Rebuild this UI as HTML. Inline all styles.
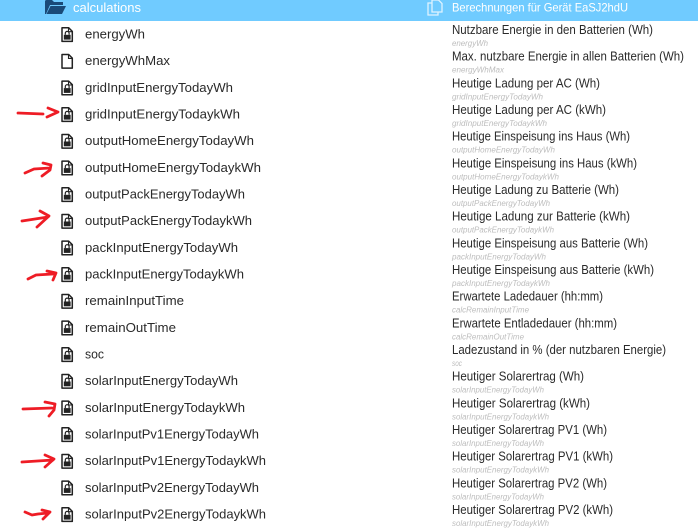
<!DOCTYPE html>
<html><head><meta charset="utf-8"><style>
html,body{margin:0;padding:0;background:#fff;width:698px;height:531px;overflow:hidden}
svg{display:block}
text{font-family:"Liberation Sans",sans-serif}
.l{font-size:13px;fill:#2a2a2a}
.t{font-size:12.5px;fill:#2a2a2a}
.s{font-size:8px;font-style:italic;fill:#bdbdbd}
.h{font-size:13px;fill:#fff}
.a{fill:none;stroke:#ee1c25;stroke-width:2.8;stroke-linecap:round;stroke-linejoin:round}
</style></head><body>
<svg width="698" height="531" viewBox="0 0 698 531" xmlns="http://www.w3.org/2000/svg">
<defs>
<g id="f"><path d="M1 .8H7.700L11.300 4.400V14.400H1Z" fill="#fff" stroke="#222" stroke-width="1.5" stroke-linejoin="round"/><path d="M7.500 1V4.700H11" fill="none" stroke="#222" stroke-width="1.100"/></g>
<g id="k"><use href="#f"/><rect x="2.800" y="7.800" width="6.800" height="4.800" fill="#222"/><path d="M4.300 7.800V6.300A1.900 1.900 0 0 1 8.100 6.300V7.800" fill="none" stroke="#222" stroke-width="1.200"/></g>
</defs>
<rect width="698" height="21" fill="#70cbff"/>
<path d="M45 1.500Q45 0 46.500 0H52L54 2H63V5H50L46 14H45Z" fill="#1a4a78"/>
<path d="M50.500 6H66L62 14H46.500Z" fill="#1a4a78"/>
<text class="h" x="73" y="12" textLength="68" lengthAdjust="spacingAndGlyphs">calculations</text>
<g fill="none" stroke="#dff3ff" stroke-width="1.300"><path d="M432 3H428V15H438V12"/><path d="M432 0H438.500L442 3.500V12H432Z"/></g>
<text class="h" x="452" y="11.500" textLength="176" lengthAdjust="spacingAndGlyphs" style="font-size:12px">Berechnungen für Gerät EaSJ2hdU</text>

<use href="#k" x="61" y="27"/>
<use href="#f" x="61" y="53.700"/>
<use href="#k" x="61" y="80.300"/>
<use href="#k" x="61" y="107"/>
<use href="#k" x="61" y="133.700"/>
<use href="#k" x="61" y="160.300"/>
<use href="#k" x="61" y="187"/>
<use href="#k" x="61" y="213.700"/>
<use href="#k" x="61" y="240.300"/>
<use href="#k" x="61" y="267"/>
<use href="#k" x="61" y="293.700"/>
<use href="#k" x="61" y="320.300"/>
<use href="#k" x="61" y="347"/>
<use href="#k" x="61" y="373.700"/>
<use href="#k" x="61" y="400.300"/>
<use href="#k" x="61" y="427"/>
<use href="#k" x="61" y="453.700"/>
<use href="#k" x="61" y="480.300"/>
<use href="#k" x="61" y="507"/>

<text class="l" lengthAdjust="spacingAndGlyphs" x="85" y="38.500" textLength="60">energyWh</text>
<text class="l" lengthAdjust="spacingAndGlyphs" x="85" y="65.200" textLength="85">energyWhMax</text>
<text class="l" lengthAdjust="spacingAndGlyphs" x="85" y="91.800" textLength="148">gridInputEnergyTodayWh</text>
<text class="l" lengthAdjust="spacingAndGlyphs" x="85" y="118.500" textLength="155">gridInputEnergyTodaykWh</text>
<text class="l" lengthAdjust="spacingAndGlyphs" x="85" y="145.200" textLength="169">outputHomeEnergyTodayWh</text>
<text class="l" lengthAdjust="spacingAndGlyphs" x="85" y="171.800" textLength="176">outputHomeEnergyTodaykWh</text>
<text class="l" lengthAdjust="spacingAndGlyphs" x="85" y="198.500" textLength="160">outputPackEnergyTodayWh</text>
<text class="l" lengthAdjust="spacingAndGlyphs" x="85" y="225.200" textLength="167">outputPackEnergyTodaykWh</text>
<text class="l" lengthAdjust="spacingAndGlyphs" x="85" y="251.800" textLength="153">packInputEnergyTodayWh</text>
<text class="l" lengthAdjust="spacingAndGlyphs" x="85" y="278.500" textLength="159">packInputEnergyTodaykWh</text>
<text class="l" lengthAdjust="spacingAndGlyphs" x="85" y="305.200" textLength="99">remainInputTime</text>
<text class="l" lengthAdjust="spacingAndGlyphs" x="85" y="331.800" textLength="91">remainOutTime</text>
<text class="l" lengthAdjust="spacingAndGlyphs" x="85" y="358.500" textLength="19">soc</text>
<text class="l" lengthAdjust="spacingAndGlyphs" x="85" y="385.200" textLength="153">solarInputEnergyTodayWh</text>
<text class="l" lengthAdjust="spacingAndGlyphs" x="85" y="411.800" textLength="160">solarInputEnergyTodaykWh</text>
<text class="l" lengthAdjust="spacingAndGlyphs" x="85" y="438.500" textLength="174">solarInputPv1EnergyTodayWh</text>
<text class="l" lengthAdjust="spacingAndGlyphs" x="85" y="465.200" textLength="181">solarInputPv1EnergyTodaykWh</text>
<text class="l" lengthAdjust="spacingAndGlyphs" x="85" y="491.800" textLength="174">solarInputPv2EnergyTodayWh</text>
<text class="l" lengthAdjust="spacingAndGlyphs" x="85" y="518.500" textLength="181">solarInputPv2EnergyTodaykWh</text>

<text class="t" lengthAdjust="spacingAndGlyphs" x="452" y="34" textLength="201">Nutzbare Energie in den Batterien (Wh)</text>
<text class="t" lengthAdjust="spacingAndGlyphs" x="452" y="60.700" textLength="232">Max. nutzbare Energie in allen Batterien (Wh)</text>
<text class="t" lengthAdjust="spacingAndGlyphs" x="452" y="87.300" textLength="148">Heutige Ladung per AC (Wh)</text>
<text class="t" lengthAdjust="spacingAndGlyphs" x="452" y="114" textLength="154">Heutige Ladung per AC (kWh)</text>
<text class="t" lengthAdjust="spacingAndGlyphs" x="452" y="140.700" textLength="178">Heutige Einspeisung ins Haus (Wh)</text>
<text class="t" lengthAdjust="spacingAndGlyphs" x="452" y="167.300" textLength="185">Heutige Einspeisung ins Haus (kWh)</text>
<text class="t" lengthAdjust="spacingAndGlyphs" x="452" y="194" textLength="167">Heutige Ladung zu Batterie (Wh)</text>
<text class="t" lengthAdjust="spacingAndGlyphs" x="452" y="220.700" textLength="178">Heutige Ladung zur Batterie (kWh)</text>
<text class="t" lengthAdjust="spacingAndGlyphs" x="452" y="247.300" textLength="196">Heutige Einspeisung aus Batterie (Wh)</text>
<text class="t" lengthAdjust="spacingAndGlyphs" x="452" y="274" textLength="202">Heutige Einspeisung aus Batterie (kWh)</text>
<text class="t" lengthAdjust="spacingAndGlyphs" x="452" y="300.700" textLength="151">Erwartete Ladedauer (hh:mm)</text>
<text class="t" lengthAdjust="spacingAndGlyphs" x="452" y="327.300" textLength="165">Erwartete Entladedauer (hh:mm)</text>
<text class="t" lengthAdjust="spacingAndGlyphs" x="452" y="354" textLength="214">Ladezustand in % (der nutzbaren Energie)</text>
<text class="t" lengthAdjust="spacingAndGlyphs" x="452" y="380.700" textLength="132">Heutiger Solarertrag (Wh)</text>
<text class="t" lengthAdjust="spacingAndGlyphs" x="452" y="407.300" textLength="138">Heutiger Solarertrag (kWh)</text>
<text class="t" lengthAdjust="spacingAndGlyphs" x="452" y="434" textLength="155">Heutiger Solarertrag PV1 (Wh)</text>
<text class="t" lengthAdjust="spacingAndGlyphs" x="452" y="460.700" textLength="161">Heutiger Solarertrag PV1 (kWh)</text>
<text class="t" lengthAdjust="spacingAndGlyphs" x="452" y="487.300" textLength="155">Heutiger Solarertrag PV2 (Wh)</text>
<text class="t" lengthAdjust="spacingAndGlyphs" x="452" y="514" textLength="161">Heutiger Solarertrag PV2 (kWh)</text>

<text class="s" lengthAdjust="spacingAndGlyphs" x="452" y="46" textLength="36">energyWh</text>
<text class="s" lengthAdjust="spacingAndGlyphs" x="452" y="72.700" textLength="52">energyWhMax</text>
<text class="s" lengthAdjust="spacingAndGlyphs" x="452" y="99.300" textLength="91">gridInputEnergyTodayWh</text>
<text class="s" lengthAdjust="spacingAndGlyphs" x="452" y="126" textLength="95">gridInputEnergyTodaykWh</text>
<text class="s" lengthAdjust="spacingAndGlyphs" x="452" y="152.700" textLength="103">outputHomeEnergyTodayWh</text>
<text class="s" lengthAdjust="spacingAndGlyphs" x="452" y="179.300" textLength="107">outputHomeEnergyTodaykWh</text>
<text class="s" lengthAdjust="spacingAndGlyphs" x="452" y="206" textLength="98">outputPackEnergyTodayWh</text>
<text class="s" lengthAdjust="spacingAndGlyphs" x="452" y="232.700" textLength="102">outputPackEnergyTodaykWh</text>
<text class="s" lengthAdjust="spacingAndGlyphs" x="452" y="259.300" textLength="94">packInputEnergyTodayWh</text>
<text class="s" lengthAdjust="spacingAndGlyphs" x="452" y="286" textLength="98">packInputEnergyTodaykWh</text>
<text class="s" lengthAdjust="spacingAndGlyphs" x="452" y="312.700" textLength="77">calcRemainInputTime</text>
<text class="s" lengthAdjust="spacingAndGlyphs" x="452" y="339.300" textLength="72">calcRemainOutTime</text>
<text class="s" lengthAdjust="spacingAndGlyphs" x="452" y="366" textLength="10">soc</text>
<text class="s" lengthAdjust="spacingAndGlyphs" x="452" y="392.700" textLength="92">solarInputEnergyTodayWh</text>
<text class="s" lengthAdjust="spacingAndGlyphs" x="452" y="419.300" textLength="97">solarInputEnergyTodaykWh</text>
<text class="s" lengthAdjust="spacingAndGlyphs" x="452" y="446" textLength="92">solarInputEnergyTodayWh</text>
<text class="s" lengthAdjust="spacingAndGlyphs" x="452" y="472.700" textLength="97">solarInputEnergyTodaykWh</text>
<text class="s" lengthAdjust="spacingAndGlyphs" x="452" y="499.300" textLength="92">solarInputEnergyTodayWh</text>
<text class="s" lengthAdjust="spacingAndGlyphs" x="452" y="526" textLength="97">solarInputEnergyTodaykWh</text>

<path class="a" d="M18 113L43 114M48 108L58 112L47 117"/>
<path class="a" d="M25 173L34 169L50 168M43 163L51 165L50 170L42 176"/>
<path class="a" d="M22 221L48 217M40 211L49 216L37 227"/>
<path class="a" d="M28 279L36 275L53 274M47 271L56 273L53 280"/>
<path class="a" d="M23 409L52 408M45 402L55 404L54 410L49 416"/>
<path class="a" d="M22 462L53 460M45 455L54 459L45 467"/>
<path class="a" d="M25 512L32 515L38 514L48 513M42 510L50 512L43 519"/>
</svg>
</body></html>
